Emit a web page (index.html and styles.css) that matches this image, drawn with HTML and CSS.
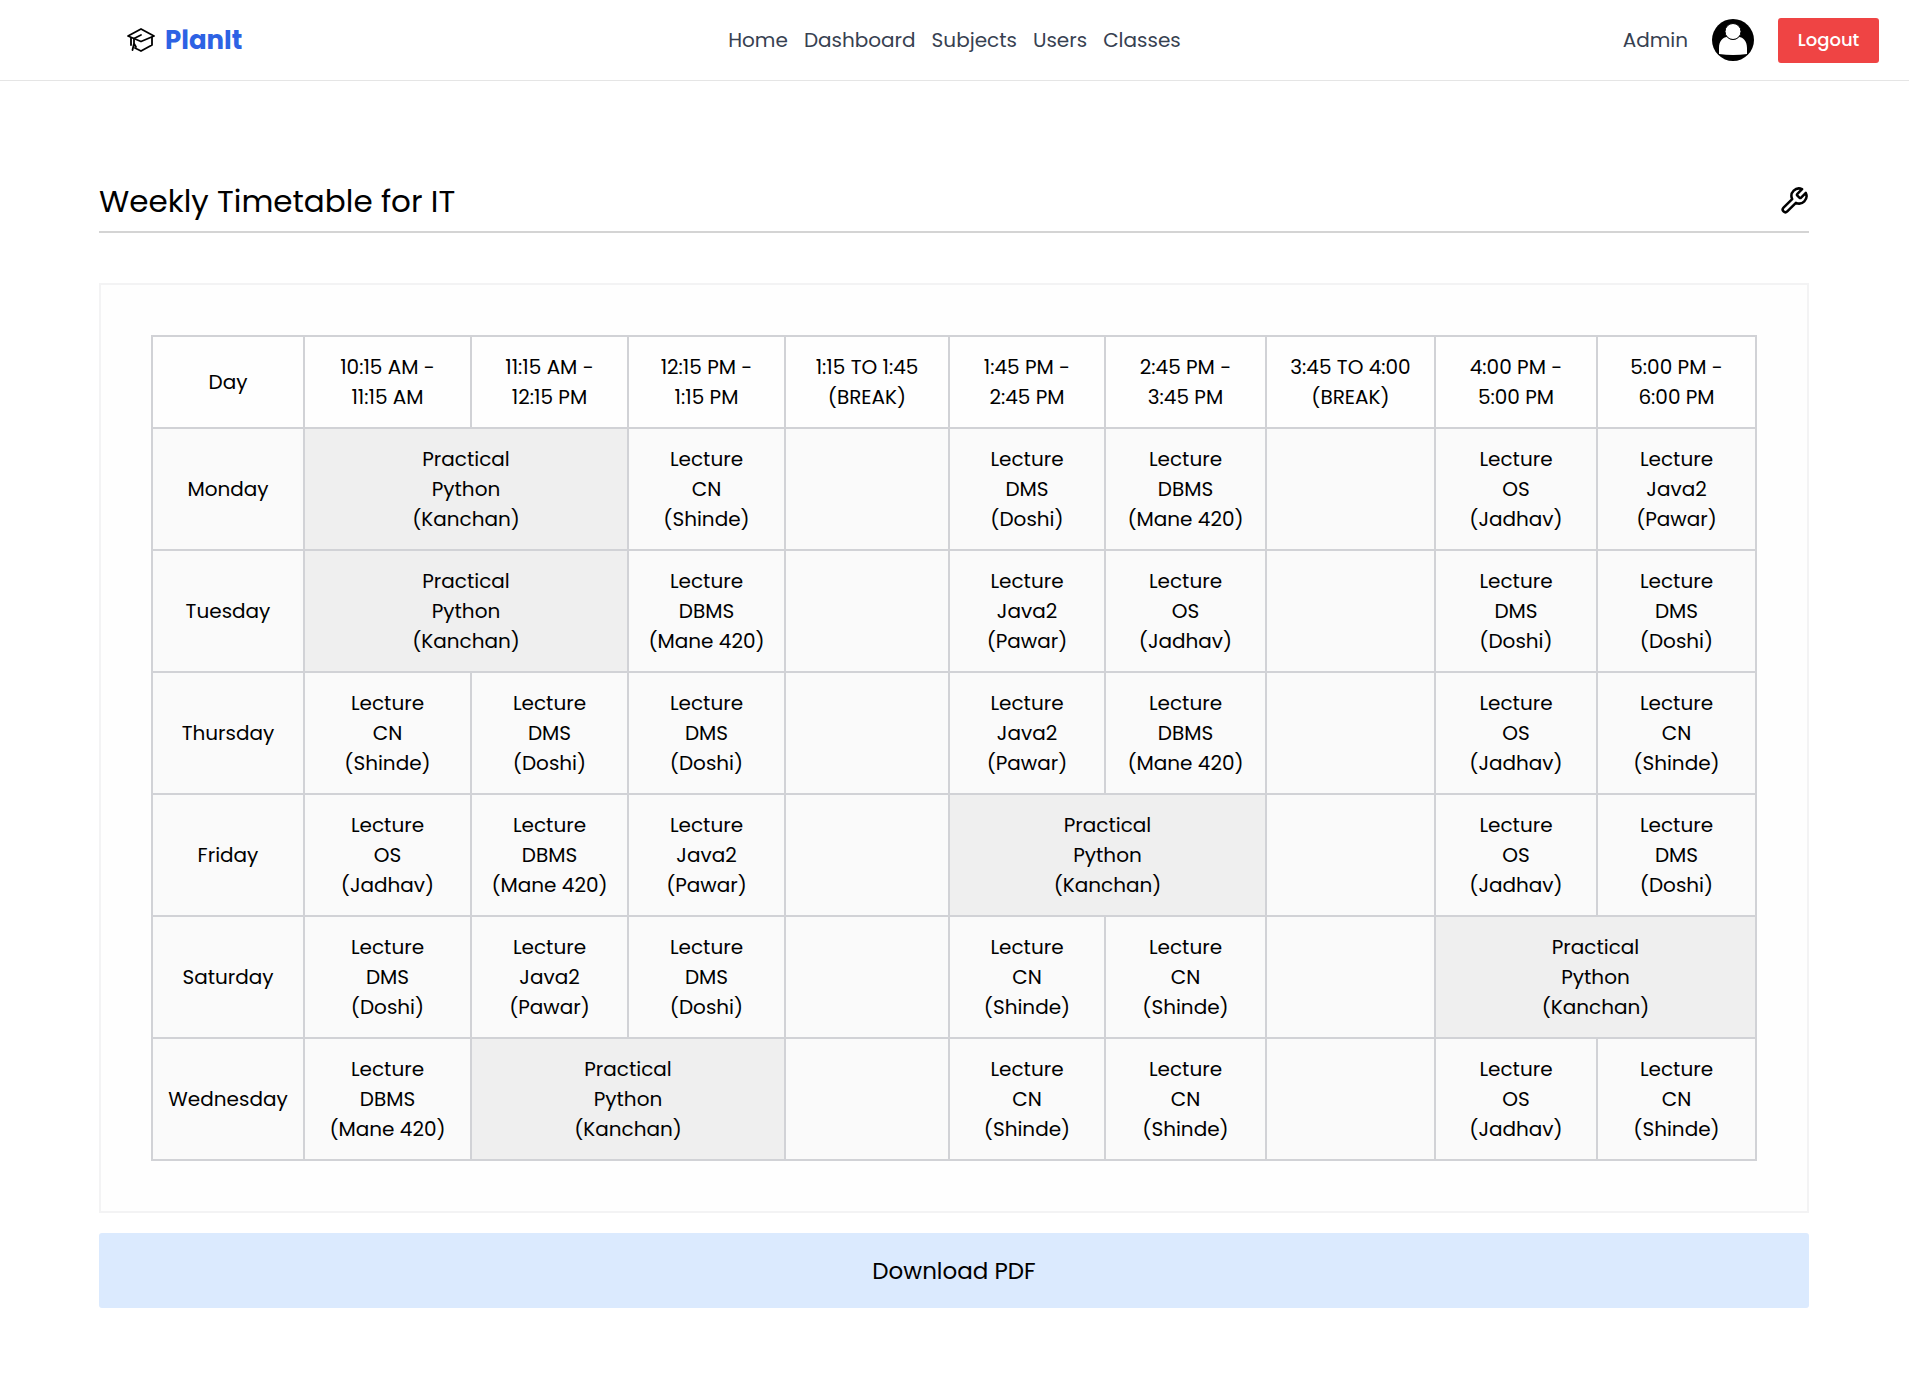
FILE: index.html
```html
<!DOCTYPE html>
<html lang="en">
<head>
<meta charset="utf-8">
<title>PlanIt - Weekly Timetable</title>
<link rel="stylesheet" href="styles.css">
</head>
<body>
<header class="topbar">
  <a class="brand" href="#">
    <svg class="brand-icon" viewBox="0 0 28 24" fill="none" stroke="#000" stroke-width="1.8" stroke-linejoin="round" stroke-linecap="round" aria-hidden="true">
      <path d="M14 1 27 8 14 13.500 1 8Z"/>
      <path d="M25 9.500V17L14 23 8 20M4 10V17"/>
      <path d="M14 7 7 10.500V17M7 15.500 5.500 22M7 15.500 9 19"/>
    </svg>
    <span>PlanIt</span>
  </a>
  <nav class="nav">
    <a href="#">Home</a>
    <a href="#">Dashboard</a>
    <a href="#">Subjects</a>
    <a href="#">Users</a>
    <a href="#">Classes</a>
  </nav>
  <div class="account">
    <span>Admin</span>
    <svg class="avatar" viewBox="0 0 42 42" aria-hidden="true">
      <circle cx="21" cy="21" r="21" fill="#000"/>
      <path d="M7 35V29C7 22 11 18 15 18Q21 24 27 18C31 18 35 22 35 29V35Q21 37 7 35Z" fill="#fff"/>
      <circle cx="21" cy="12.500" r="8" fill="#fff" stroke="#000" stroke-width="1"/>
    </svg>
    <button class="logout" type="button">Logout</button>
  </div>
</header>
<main class="page">
  <div class="heading">
    <h1>Weekly Timetable for IT</h1>
    <button class="tool" type="button" aria-label="Edit timetable">
      <svg viewBox="0 0 24 24" fill="none" stroke="#000" stroke-width="2" stroke-linecap="round" stroke-linejoin="round" aria-hidden="true">
        <path d="M14.700 6.300a1 1 0 0 0 0 1.400l1.600 1.600a1 1 0 0 0 1.400 0l3.770-3.770a6 6 0 0 1-7.940 7.940l-6.910 6.910a2.120 2.120 0 0 1-3-3l6.910-6.910a6 6 0 0 1 7.940-7.940l-3.760 3.760z"/>
      </svg>
    </button>
  </div>
  <section class="card">
    <table class="timetable">
      <colgroup>
        <col class="w-day"><col class="w-1"><col class="w-2"><col class="w-2"><col class="w-4"><col class="w-5"><col class="w-6"><col class="w-7"><col class="w-8"><col class="w-9">
      </colgroup>
      <thead>
        <tr><th>Day</th><th>10:15 AM -<br>11:15 AM</th><th>11:15 AM -<br>12:15 PM</th><th>12:15 PM -<br>1:15 PM</th><th>1:15 TO 1:45<br>(BREAK)</th><th>1:45 PM -<br>2:45 PM</th><th>2:45 PM -<br>3:45 PM</th><th>3:45 TO 4:00<br>(BREAK)</th><th>4:00 PM -<br>5:00 PM</th><th>5:00 PM -<br>6:00 PM</th></tr>
      </thead>
      <tbody>
        <tr><td>Monday</td><td class="practical" colspan="2">Practical<br>Python<br>(Kanchan)</td><td>Lecture<br>CN<br>(Shinde)</td><td></td><td>Lecture<br>DMS<br>(Doshi)</td><td>Lecture<br>DBMS<br>(Mane 420)</td><td></td><td>Lecture<br>OS<br>(Jadhav)</td><td>Lecture<br>Java2<br>(Pawar)</td></tr>
        <tr><td>Tuesday</td><td class="practical" colspan="2">Practical<br>Python<br>(Kanchan)</td><td>Lecture<br>DBMS<br>(Mane 420)</td><td></td><td>Lecture<br>Java2<br>(Pawar)</td><td>Lecture<br>OS<br>(Jadhav)</td><td></td><td>Lecture<br>DMS<br>(Doshi)</td><td>Lecture<br>DMS<br>(Doshi)</td></tr>
        <tr><td>Thursday</td><td>Lecture<br>CN<br>(Shinde)</td><td>Lecture<br>DMS<br>(Doshi)</td><td>Lecture<br>DMS<br>(Doshi)</td><td></td><td>Lecture<br>Java2<br>(Pawar)</td><td>Lecture<br>DBMS<br>(Mane 420)</td><td></td><td>Lecture<br>OS<br>(Jadhav)</td><td>Lecture<br>CN<br>(Shinde)</td></tr>
        <tr><td>Friday</td><td>Lecture<br>OS<br>(Jadhav)</td><td>Lecture<br>DBMS<br>(Mane 420)</td><td>Lecture<br>Java2<br>(Pawar)</td><td></td><td class="practical" colspan="2">Practical<br>Python<br>(Kanchan)</td><td></td><td>Lecture<br>OS<br>(Jadhav)</td><td>Lecture<br>DMS<br>(Doshi)</td></tr>
        <tr><td>Saturday</td><td>Lecture<br>DMS<br>(Doshi)</td><td>Lecture<br>Java2<br>(Pawar)</td><td>Lecture<br>DMS<br>(Doshi)</td><td></td><td>Lecture<br>CN<br>(Shinde)</td><td>Lecture<br>CN<br>(Shinde)</td><td></td><td class="practical" colspan="2">Practical<br>Python<br>(Kanchan)</td></tr>
        <tr><td>Wednesday</td><td>Lecture<br>DBMS<br>(Mane 420)</td><td class="practical" colspan="2">Practical<br>Python<br>(Kanchan)</td><td></td><td>Lecture<br>CN<br>(Shinde)</td><td>Lecture<br>CN<br>(Shinde)</td><td></td><td>Lecture<br>OS<br>(Jadhav)</td><td>Lecture<br>CN<br>(Shinde)</td></tr>
      </tbody>
    </table>
  </section>
  <button class="download" type="button">Download PDF</button>
</main>
</body>
</html>
```
FILE: styles.css
```css
* { box-sizing: border-box; }

body {
  margin: 0;
  background: #fff;
  color: #000;
  font: 400 20px/30px Poppins, Inter, sans-serif;
}

button { font: inherit; color: inherit; border: 0; cursor: pointer; }
a { color: inherit; text-decoration: none; }

.topbar {
  display: grid;
  grid-template-columns: 1fr auto 1fr;
  align-items: center;
  height: 81px;
  padding: 0 30px;
  border-bottom: 1px solid #e5e5e5;
  color: #374151;
}
.brand {
  display: flex;
  align-items: center;
  gap: 10px;
  padding-left: 97px;
  color: #2d62e4;
  font-size: 26px;
  font-weight: 700;
}
.brand-icon { width: 28px; height: 24px; }
.nav { display: flex; gap: 16px; }
.account {
  display: flex;
  align-items: center;
  justify-content: flex-end;
  gap: 24px;
}
.avatar { width: 42px; height: 42px; }
.logout {
  width: 101px;
  height: 45px;
  padding: 0;
  border-radius: 3px;
  background: #ef4444;
  color: #fff;
  font-size: 18px;
  font-weight: 500;
}

.page {
  display: flex;
  flex-direction: column;
  padding: 95px 100px 75px 99px;
}
.heading {
  display: flex;
  align-items: center;
  justify-content: space-between;
  height: 57px;
  margin-bottom: 50px;
  padding-bottom: 5px;
  border-bottom: 2px solid #d4d4d4;
}
h1 { margin: 0; font-size: 31px; font-weight: 400; }
.tool { display: flex; padding: 0; background: none; }
.tool svg { width: 30px; height: 30px; }

.card {
  margin-bottom: 20px;
  padding: 50px;
  border: 2px solid #f3f3f4;
  background: #fefefe;
}
.timetable {
  width: 100%;
  border-collapse: collapse;
  table-layout: fixed;
  text-align: center;
}
.timetable th,
.timetable td {
  height: 122px;
  padding: 15px 0;
  border: 2px solid #d1d2d6;
  background: #fafafa;
}
.timetable th { height: 92px; background: #fefefe; font-weight: 400; }
.timetable .practical { background: #efefef; }

.w-day { width: 152px; }
.w-1 { width: 167px; }
.w-2 { width: 157px; }
.w-4 { width: 164px; }
.w-5 { width: 156px; }
.w-6 { width: 161px; }
.w-7 { width: 169px; }
.w-8 { width: 162px; }
.w-9 { width: 159px; }

.download {
  height: 75px;
  border-radius: 3px;
  background: #dbeafe;
  font-size: 23px;
}
```
